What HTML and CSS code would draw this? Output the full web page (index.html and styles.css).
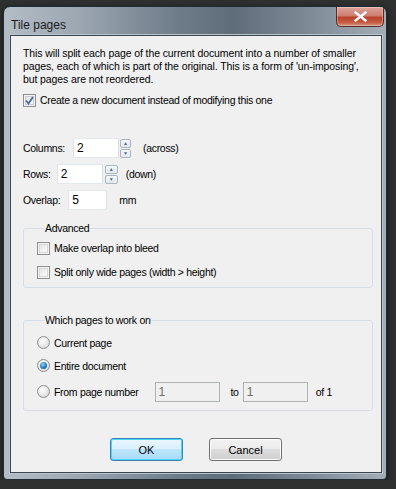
FILE: index.html
```html
<!DOCTYPE html>
<html lang="en">
<head>
    <meta charset="UTF-8" />
    <title>Tile pages</title>
    <link rel="stylesheet" href="styles.css">
</head>
<body>
    <div class="window">
        <div class="titlebar">
            <span class="title">Tile pages</span>
            <button class="close">
                <svg width="13" height="11" viewBox="0 0 13 11">
                    <path d="M1.5 1.5 L11.5 9.5 M11.5 1.5 L1.5 9.5" stroke="#ffffff" stroke-width="2.4" stroke-linecap="square"/>
                </svg>
            </button>
        </div>
        <div class="client">
            <p class="intro">This will split each page of the current document into a number of smaller pages, each of which is part of the original. This is a form of 'un-imposing', but pages are not reordered.</p>
            <label class="check-row">
                <span class="checkbox checked">
                    <svg width="9" height="9" viewBox="0 0 9 9">
                        <path d="M1 4.5 L3.5 7.5 L8 1" fill="none" stroke="#4a6a9a" stroke-width="1.8"/>
                    </svg>
                </span>
                Create a new document instead of modifying this one
            </label>

            <div class="fields">
                <div class="field">
                    <span class="field-label">Columns:</span>
                    <span class="textbox w-cols">2</span>
                    <span class="spinner">
                        <span class="spin-btn">&#9650;</span>
                        <span class="spin-btn">&#9660;</span>
                    </span>
                    <span class="unit u-cols">(across)</span>
                </div>
                <div class="field">
                    <span class="field-label">Rows:</span>
                    <span class="textbox w-rows">2</span>
                    <span class="spinner">
                        <span class="spin-btn">&#9650;</span>
                        <span class="spin-btn">&#9660;</span>
                    </span>
                    <span class="unit u-rows">(down)</span>
                </div>
                <div class="field">
                    <span class="field-label">Overlap:</span>
                    <span class="textbox w-overlap">5</span>
                    <span class="unit u-mm">mm</span>
                </div>
            </div>

            <fieldset class="group advanced">
                <legend>Advanced</legend>
                <label class="check-row"><span class="checkbox"></span>Make overlap into bleed</label>
                <label class="check-row"><span class="checkbox"></span>Split only wide pages (width &gt; height)</label>
            </fieldset>

            <fieldset class="group pages">
                <legend>Which pages to work on</legend>
                <label class="radio-row"><span class="radio"></span>Current page</label>
                <label class="radio-row"><span class="radio selected"></span>Entire document</label>
                <label class="radio-row range">
                    <span class="radio"></span>From page number
                    <span class="textbox disabled r-from">1</span>
                    <span class="to">to</span>
                    <span class="textbox disabled">1</span>
                    <span class="of">of 1</span>
                </label>
            </fieldset>

            <div class="buttons">
                <button class="btn default">OK</button>
                <button class="btn">Cancel</button>
            </div>
        </div>
    </div>
</body>
</html>
```

FILE: styles.css
```css
*,
*:before,
*:after{
    padding: 0;
    margin: 0;
    box-sizing: border-box;
}
body{
    background-color: #2f3030;
    font-family: "Liberation Sans", Arial, sans-serif;
    font-size: 10.5px;
    letter-spacing: -0.3px;
    color: #000000;
}
.window{
    width: 384px;
    height: 474px;
    margin: 6px 0 0 3px;
    border: 1px solid #1f2a33;
    border-radius: 7px 7px 4px 4px;
    background: linear-gradient(90deg, #b4bdc6 0%, #9ba6b1 20%, #6f7d8a 45%, #5f6c79 60%, #7e8b97 80%, #a2adb7 100%);
    box-shadow: 0 2px 6px rgba(0,0,0,0.6);
    display: flex;
    flex-direction: column;
    overflow: hidden;
}
.titlebar{
    height: 28px;
    display: flex;
    align-items: flex-start;
    justify-content: space-between;
    padding-left: 7px;
}
.title{
    font-size: 12px;
    letter-spacing: 0;
    color: #1a1a1a;
    margin-top: 11px;
}
.close{
    width: 48px;
    height: 20px;
    margin-right: 2px;
    border: 1px solid #5b2a24;
    border-top: none;
    border-radius: 0 0 5px 5px;
    background: linear-gradient(180deg, #dba59c 0%, #cf7f70 45%, #b9432d 55%, #c45a41 80%, #d69580 100%);
    display: flex;
    align-items: center;
    justify-content: center;
    box-shadow: inset 0 0 0 1px rgba(255,255,255,0.3);
}
.client{
    flex: 1;
    margin: 0 4px 6px 6px;
    border: 1px solid #3a4651;
    background-color: #f0f0f0;
    box-shadow: 0 0 0 1px #b9c4cd;
    padding: 11px 10px 0 12px;
    display: flex;
    flex-direction: column;
}
.intro{
    line-height: 13px;
    width: 350px;
    letter-spacing: -0.1px;
}
.check-row{
    display: flex;
    align-items: center;
    height: 13px;
    gap: 4px;
    line-height: 13px;
}
.client > .check-row{
    margin-top: 8px;
}
.checkbox{
    width: 13px;
    height: 13px;
    border: 1px solid #8f8f8f;
    background: linear-gradient(135deg, #dcdcdc 0%, #f4f4f4 60%, #ffffff 100%);
    box-shadow: inset 0 0 0 1px #f4f4f4, inset 0 0 0 2px #d8d8d8;
    display: flex;
    align-items: center;
    justify-content: center;
}
.checkbox.checked{
    box-shadow: inset 0 0 0 1px #f4f4f4, inset 0 0 0 2px #c8ccd4;
}
.fields{
    margin-top: 31px;
    display: flex;
    flex-direction: column;
    gap: 6px;
}
.field{
    display: flex;
    align-items: center;
    height: 20px;
}
.textbox{
    height: 20px;
    background-color: #ffffff;
    border: 1px solid #abadb3;
    border-top-color: #e3e9ef;
    border-left-color: #e2e3ea;
    border-right-color: #dbdfe6;
    border-bottom-color: #e3e9ef;
    font-size: 12px;
    letter-spacing: 0;
    line-height: 18px;
    padding-left: 3px;
    display: inline-block;
}
.w-cols{ width: 46px; margin-left: 8px; }
.w-rows{ width: 46px; margin-left: 6px; }
.w-overlap{ width: 39px; margin-left: 8px; }
.spinner{
    display: flex;
    flex-direction: column;
    gap: 1px;
    margin-left: 1px;
}
.spin-btn{
    width: 11px;
    height: 9px;
    border: 1px solid #a9b6c2;
    border-radius: 2px;
    background: linear-gradient(180deg, #f5f7f9 0%, #e4e9ee 100%);
    color: #4d6b8a;
    font-size: 5px;
    letter-spacing: 0;
    line-height: 7px;
    text-align: center;
}
.w-rows + .spinner{ margin-left: 2px; }
.w-rows + .spinner .spin-btn{ width: 13px; }
.u-cols{ margin-left: 12px; }
.u-rows{ margin-left: 8px; }
.u-mm{ margin-left: 12px; }
.group{
    border: 1px solid #d5dfe5;
    border-radius: 3px;
    width: 350px;
    padding: 0 0 0 13px;
}
.group legend{
    margin-left: 7px;
    padding: 0 1px;
    line-height: 13px;
}
.advanced{
    margin-top: 12px;
    height: 66px;
    display: flex;
    flex-direction: column;
    gap: 11px;
    padding-top: 7px;
}
.pages{
    margin-top: 26px;
    height: 97px;
    padding-top: 9px;
}
.radio-row{
    display: flex;
    align-items: center;
    height: 13px;
    gap: 4px;
    margin-bottom: 10px;
}
.radio{
    width: 13px;
    height: 13px;
    border-radius: 50%;
    border: 1px solid #8e8f8f;
    background: radial-gradient(circle at 40% 35%, #ffffff 0%, #e8e8e8 50%, #cfcfcf 100%);
    display: flex;
    align-items: center;
    justify-content: center;
}
.radio.selected:after{
    content: "";
    width: 7px;
    height: 7px;
    border-radius: 50%;
    background: radial-gradient(circle at 40% 35%, #8fd3f5 0%, #2a7fb8 55%, #0b3f73 100%);
}
.range{
    margin-top: 13px;
}
.textbox.disabled{
    width: 65px;
    background-color: #f0f0f0;
    border-color: #adb2b5;
    color: #6d6d6d;
}
.r-from{ margin-left: 12px; }
.to{ margin: 0 0 0 7px; }
.of{ margin-left: 4px; }
.buttons{
    display: flex;
    justify-content: center;
    gap: 26px;
    margin-top: 27px;
    padding-right: 2px;
}
.btn{
    width: 73px;
    height: 23px;
    font-family: "Liberation Sans", Arial, sans-serif;
    font-size: 11px;
    color: #000000;
    border: 1px solid #707070;
    border-radius: 3px;
    background: linear-gradient(180deg, #f2f2f2 0%, #ebebeb 49%, #dddddd 50%, #cfcfcf 100%);
    box-shadow: inset 0 0 0 1px #fcfcfc;
}
.btn.default{
    border-color: #3c7fb1;
    background: linear-gradient(180deg, #eaf6fd 0%, #d9f0fc 49%, #bee6fd 50%, #a7d9f5 100%);
    box-shadow: inset 0 0 0 1px #48d8fb;
}
```
